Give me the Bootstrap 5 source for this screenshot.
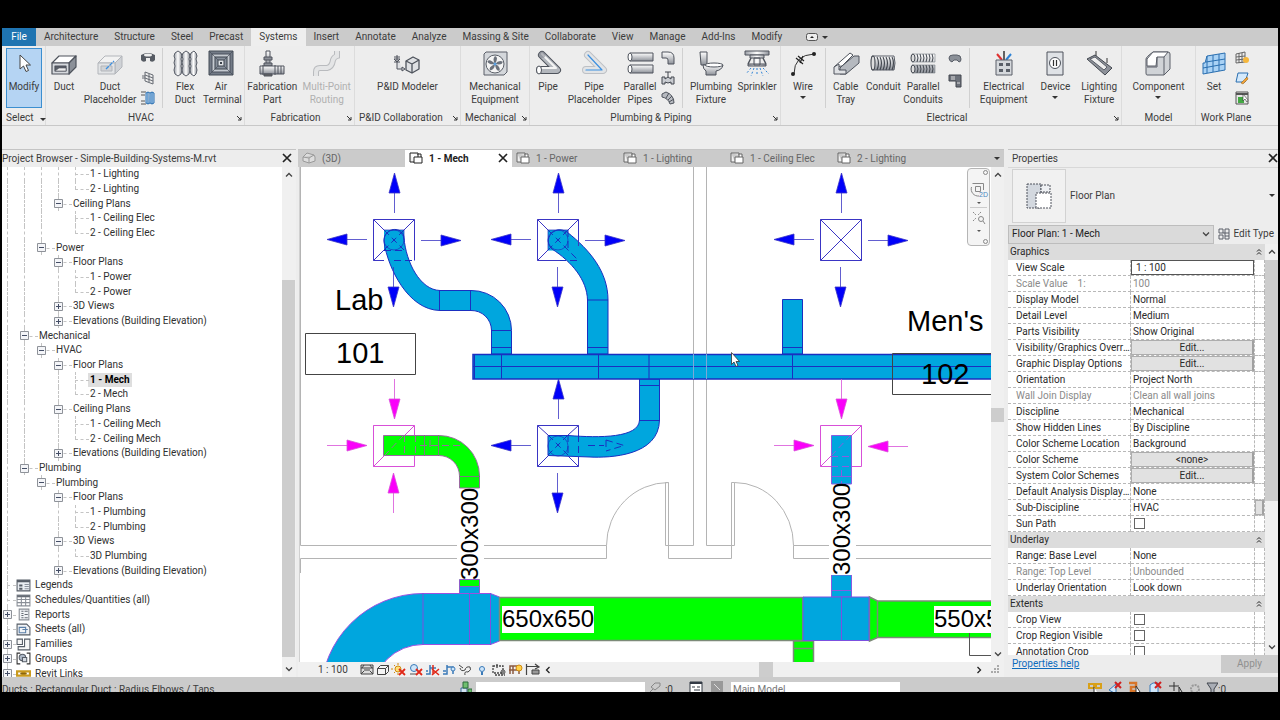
<!DOCTYPE html>
<html lang="en">
<head>
<meta charset="utf-8">
<meta name="viewport" content="width=device-width, initial-scale=1">
<title>Simple-Building-Systems-M.rvt - Floor Plan: 1 - Mech</title>
<link href="https://cdn.jsdelivr.net/npm/bootstrap@5.3.0/dist/css/bootstrap.min.css" rel="stylesheet">
<style>
:root{--chrome:#ededed;--bar:#cbcbcb;--ink:#3c3c3c;--edge:#c4c4c4}
body{background:#000;color:var(--ink);font:10px/14px Roboto,"Open Sans",sans-serif;padding:28px 2px;overflow:hidden}
button,input,select{font:inherit;color:inherit}
button{background:none;border:0;padding:0}
svg{display:block;flex:none}
.app{background:var(--chrome);min-height:0}
/* ribbon tabs */
.rtabs{background:var(--bar);height:18px}
.rtabs button{padding:0 8px;line-height:18px;white-space:nowrap}
.rtabs .file{background:#1f74b1;color:#fff;width:34px}
.rtabs .on{background:#eee}
/* ribbon */
.ribbon{height:80px;border-bottom:1px solid #c8c8c8}
.rp{border-right:1px solid #dcdcdc;position:relative}
.rp-title{line-height:16px;height:16px}
.rp-body{height:64px;padding-top:2px;align-items:flex-start}
.rb{text-align:center;line-height:13px;padding-top:2px;white-space:nowrap}
.rb svg{margin:0 auto 2px}
.rb.off{color:#b0b0b0}
.rb.sel{background:#b5d4f3;border:1px solid #3c8fd0;padding:1px 0 14px}
.w36{width:36px}.w40{width:40px}.w44{width:44px}.w48{width:48px}.w56{width:56px}.w60{width:60px}
.stk{width:20px;height:60px}
.vsep{width:1px;margin:0 4px;background:#d0d0d0;height:60px}
.dd{border:3px solid transparent;border-top:3px solid #333;border-bottom:0;width:0;height:0;display:inline-block}
.launch{position:absolute;right:2px;bottom:4px}
.p-sel{width:44px}.p-hvac{width:199px}.p-fab{width:110px}.p-pid{width:106px}.p-mech{width:69px}.p-plumb{width:251px}.p-elec{width:341px}.p-model{width:74px}.p-work{width:60px;border:0}
.options{height:23px}
/* docked panels */
.dock-l{width:294px;border-top:1px solid var(--edge)}
.dock-r{width:270px;border-top:1px solid var(--edge)}
.center{border-top:1px solid var(--edge);margin-left:2px}
.ph{height:17px;line-height:17px}
.tree{background:#fff;color:#303030}
.tree ul{height:calc(100% + 4px)}
.tree li{flex:1 1 0;min-height:0;display:flex;align-items:stretch;white-space:nowrap}
.tree li>span{align-self:center}
.tree b{align-self:center;background:#dedede;color:#000;padding:0 2px;margin-left:-2px}
.gd{width:17px;position:relative;flex:none}
.gd:first-child{width:14px}
.gd{--x:8px}.gd:first-child{--x:5px}
.gd.ln::before,.gd.te::before,.gd.co::before{content:"";position:absolute;left:var(--x);top:0;bottom:0;border-left:1px dashed #c4c4c4}
.gd.co::before{bottom:50%}
.gd.te::after,.gd.co::after,.gd.bx::after{content:"";position:absolute;left:var(--x);right:-5px;top:50%;border-top:1px dashed #c4c4c4}
.gd:first-child::after{right:0!important}
.gd svg{position:absolute;left:calc(var(--x) - 4px);top:3px;z-index:1}
.gap6{padding-left:6px}
.sb{width:13px;flex:none;background:#f0f0f0}
.sb .thumb{background:#cdcdcd}
.sb svg{margin:4px auto}
.dock-l .sb{width:14px;padding-right:1px}
.mw0{min-width:0}
/* view tabs */
.vtabs{background:var(--bar);height:17px;color:#666}
.vt{width:107px;padding-left:10px;line-height:17px;gap:6px}
.vt.on{background:#fff;color:#222;padding-left:4px}
.canvas{background:#fff;border-left:1px solid #d0d0d0;margin-left:1px}
.canvas text{font-family:"Liberation Sans",Arial,sans-serif}
.navw{position:absolute;top:1px;right:1px;width:23px;height:78px;border:1px solid #b5b5b5;border-radius:4px;background:#f4f4f4}
.viewbar{height:15px;background:#f0f0f0}
.viewbar .scale{width:46px;padding-left:20px;white-space:nowrap}
.gutter{margin-left:4px}
/* properties */
.typerow{border-top:1px solid #d8d8d8;padding:1px 3px 2px 4px}
.thumbbox{width:54px;height:54px;border:1px solid #d2d2d2;background:#f1f1f1}
.typesel{height:19px;background:#dadada;border:1px solid #bdbdbd;border-radius:0;padding:0 3px;appearance:none;color:#222}
.props{width:100%;table-layout:fixed;border-collapse:separate;border-spacing:0;background:#fff;color:#2a2a2a}
.props td,.props th{height:16px;padding:0 2px;line-height:15px;font-weight:400;white-space:nowrap;overflow:hidden;border-bottom:1px dashed #b8b8b8;border-right:1px dashed #b8b8b8}
.props th[scope=row]{padding:0 0 0 8px;text-overflow:ellipsis}
.props th.grp{background:#dcdcdc;border:0;line-height:16px}
.props .dim>*{color:#8a8a8a}
.props td.full{padding:0}
.props .eb{display:block;width:100%;height:15px;background:#e1e1e1;border:1px solid #adadad;border-right:2px solid #a0a0a0;line-height:13px;text-align:center}
.props input[type=text]{display:block;width:100%;height:15px;border:1px solid #555;padding:0 4px;background:#fff}
.props input[type=checkbox]{appearance:none;display:block;width:11px;height:11px;border:1px solid #666;margin:0 0 0 1px;background:#fff}
.cn{width:123px}.cx{width:10px}
.apply{width:57px;height:18px;background:#cbcbcb;color:#8f8f8f}
.help{color:#0f6cbd}
/* status bar */
.status{height:15px;background:var(--bar);overflow:hidden}
.status>*{flex:none}
.status select{appearance:none;height:20px;margin-top:5px;border:0;border-radius:0;background:#fff;color:#777;padding:0 6px 4px 2px;line-height:16px}
.st{line-height:26px}
.status .worksets{width:169px}
.status .toolset{margin-left:188px}
.status .st:last-child{margin-right:4px}
</style>
</head>
<body class="vh-100 d-flex flex-column">

<svg width="0" height="0" class="position-absolute" aria-hidden="true">
<defs>
<linearGradient id="gm" x1="0" y1="0" x2="0" y2="1"><stop offset="0" stop-color="#fff"/><stop offset="1" stop-color="#8d9199"/></linearGradient>
<linearGradient id="gh" x1="0" y1="0" x2="1" y2="0"><stop offset="0" stop-color="#9a9ea6"/><stop offset=".5" stop-color="#fff"/><stop offset="1" stop-color="#8d9199"/></linearGradient>
<symbol id="i-duct" viewBox="0 0 28 28"><g stroke="#4e535c" stroke-width="1.2" stroke-linejoin="round"><path d="M2 13L9 6H26L19 13z" fill="#fff"/><path d="M19 13L26 6V17L19 24z" fill="#8b9098"/><path d="M2 13H19V24H2z" fill="#d6d9dd"/><path d="M5 16H16V21H5z" fill="#5a5f68"/><path d="M5 21L9 18H16V21z" fill="#eee" stroke-width=".6"/></g></symbol>
<symbol id="i-ductp" viewBox="0 0 28 28"><g stroke="#b2b5ba" stroke-linejoin="round"><path d="M2 13L9 6H26L19 13z" fill="#f2f2f2"/><path d="M19 13L26 6V17L19 24z" fill="#cfd2d6"/><path d="M2 13H19V24H2z" fill="#e2e4e6"/><path d="M5 16H16V21H5z" fill="#d0d2d5"/></g><path d="M10 19L18 11" stroke="#3b8fe0" stroke-width="1.3" stroke-dasharray="4 1"/></symbol>
<symbol id="i-flex" viewBox="0 0 28 28"><g fill="url(#gh)" stroke="#5b606a" stroke-width="1"><path d="M4 3L7 1L10 3Q12 6 10 9Q12 13 10 16Q12 20 10 24L7 26L4 24Q2 20 4 16Q2 13 4 9Q2 6 4 3z"/><path d="M12 3L15 1L18 3Q20 6 18 9Q20 13 18 16Q20 20 18 24L15 26L12 24Q10 20 12 16Q10 13 12 9Q10 6 12 3z"/><path d="M20 3L23 1L25 3Q27 6 25 9Q27 13 25 16Q27 20 25 24L23 26L20 24Q18 20 20 16Q18 13 20 9Q18 6 20 3z"/></g></symbol>
<symbol id="i-air" viewBox="0 0 28 28"><path d="M2 1H26V25H2z" fill="#737b87" stroke="#454c57"/><path d="M5 4H23V22H5z" fill="#c5cad1" stroke="#4a515c"/><path d="M8 7H20V19H8z" fill="#858d99" stroke="#3d444e"/><path d="M11 10H17V16H11z" fill="#dfe2e6" stroke="#3d444e"/><path d="M13 12H15V14H13z" fill="#394049"/><path d="M2 1L11 10M26 1L17 10M2 25L11 16M26 25L17 16" stroke="#454c57" stroke-width=".7"/></symbol>
<symbol id="i-fab" viewBox="0 0 28 28"><g fill="url(#gm)" stroke="#4e535c"><path d="M8 1H12V15H8z"/><path d="M6 7H14V10H6zM6 13H14V16H6z" fill="#8d9199"/><path d="M2 16H26V24H2z"/><path d="M17 15V25M20 16V24M23 16V24M5 15V25" fill="none"/><path d="M6 24H14V26H6z" fill="#666"/></g></symbol>
<symbol id="i-multi" viewBox="0 0 28 28"><path d="M3 26V22Q3 18 7 18H14Q19 17 20 10Q21 7 24 6V1" fill="none" stroke="#b9bbbe" stroke-width="6"/><path d="M3 26V22Q3 18 7 18H14Q19 17 20 10Q21 7 24 6V1" fill="none" stroke="#e4e5e6" stroke-width="4"/></symbol>
<symbol id="i-pid" viewBox="0 0 28 28"><g fill="#dfe1e4" stroke="#4e535c" stroke-width="1.3" stroke-linejoin="round"><path d="M13 11L20 7L26 10V19L19 23L13 20z"/><path d="M13 11L19 14L26 10M19 14V23" fill="none"/><path d="M4 5V19H9M1 7H7M1 12H7M4 12L1 9H7zM9 17V21L12 19z" stroke-width="1"/></g></symbol>
<symbol id="i-mech" viewBox="0 0 28 28"><path d="M3 4L5 2H26V22L23 25H3z" fill="#d4d7db" stroke="#5a5f68"/><circle cx="14" cy="14" r="9" fill="#f4f4f4" stroke="#5a5f68"/><g fill="#6b717b"><path d="M14 14Q11 9 14 6Q18 7 14 14z"/><path d="M14 14Q11 9 14 6Q18 7 14 14z" transform="rotate(72 14 14)"/><path d="M14 14Q11 9 14 6Q18 7 14 14z" transform="rotate(144 14 14)"/><path d="M14 14Q11 9 14 6Q18 7 14 14z" transform="rotate(216 14 14)"/><path d="M14 14Q11 9 14 6Q18 7 14 14z" transform="rotate(288 14 14)"/></g><circle cx="14" cy="14" r="1.5" fill="#5ba0e0"/></symbol>
<symbol id="i-pipe" viewBox="0 0 28 28"><g fill="none" stroke-linecap="round" stroke-linejoin="round"><path d="M8 5L23 20H6" stroke="#4e535c" stroke-width="8"/><path d="M8 5L23 20H6" stroke="#b3b7bd" stroke-width="6"/><path d="M8 4L22 18H6" stroke="#f4f4f4" stroke-width="2"/></g><ellipse cx="5" cy="20" rx="2.500" ry="4" fill="#fff" stroke="#4e535c"/><ellipse cx="8" cy="5" rx="3.500" ry="3" fill="#777c85" opacity=".5"/></symbol>
<symbol id="i-pipep" viewBox="0 0 28 28"><g fill="none" stroke-linecap="round" stroke-linejoin="round"><path d="M8 5L23 20H6" stroke="#bdc0c5" stroke-width="8"/><path d="M8 5L23 20H6" stroke="#e2e4e6" stroke-width="6"/><path d="M8 5L22 20H6" stroke="#3b8fe0" stroke-width="1.2"/></g></symbol>
<symbol id="i-par" viewBox="0 0 28 28"><g fill="url(#gm)" stroke="#4e535c"><path d="M4 3H27V11H4z"/><ellipse cx="4" cy="7" rx="2" ry="4" fill="#fff"/><path d="M4 15H27V23H4z"/><ellipse cx="4" cy="19" rx="2" ry="4" fill="#fff"/></g></symbol>
<symbol id="i-wc" viewBox="0 0 28 28"><g fill="url(#gm)" stroke="#4e535c"><path d="M3 2H10V15H4z"/><path d="M6 15H26Q25 20 19 21V25H9V21Q6 19 6 15z"/><ellipse cx="17" cy="15" rx="9" ry="2" fill="#fff"/></g></symbol>
<symbol id="i-spr" viewBox="0 0 28 28"><g fill="url(#gh)" stroke="#4e535c"><path d="M2 1H26V5H2z"/><path d="M7 5H21V8H7zM11 8H17V15H11zM5 14H23V16H5z"/><path d="M8 8L5 14M20 8L23 14" stroke-width="1.500"/></g><path d="M8 18L3 24M11 18L8 26M14 18V26M17 18L20 26M20 18L26 24" stroke="#2f83d6" stroke-dasharray="2 2"/></symbol>
<symbol id="i-wire" viewBox="0 0 28 28"><path d="M5 24Q5 5 25 4" fill="none" stroke="#333"/><circle cx="4" cy="24" r="2" fill="#222"/><circle cx="25" cy="4" r="2" fill="#222"/><path d="M7 8L14 14M9 6L15 11M11 13L14 6" stroke="#222" stroke-width="1.200"/></symbol>
<symbol id="i-tray" viewBox="0 0 28 28"><g stroke="#4e535c" stroke-linejoin="round"><path d="M2 17L18 3L21 5L10 16z" fill="#fff"/><path d="M10 16L22 6L27 6V13L14 24L8 24V18z" fill="#b5b9bf"/><path d="M2 17L7 14V20L14 20V24H2z" fill="#dfe1e4"/></g></symbol>
<symbol id="i-cond" viewBox="0 0 28 28"><path d="M3 6H25Q27 13 25 20H3z" fill="url(#gm)" stroke="#5a5f68"/><g fill="none" stroke="#42474f" stroke-width="1.100"><ellipse cx="4" cy="13" rx="2" ry="7" fill="#ddd"/><path d="M8 7Q11 13 8 20M11 7Q14 13 11 20M14 7Q17 13 14 20M17 7Q20 13 17 20M20 7Q23 13 20 20M23 7Q26 13 23 20"/></g></symbol>
<symbol id="i-pcond" viewBox="0 0 28 28"><path d="M3 4H26V12H3zM3 15H26V23H3z" fill="url(#gm)" stroke="#7a7f88" stroke-width=".6"/><g fill="none" stroke="#42474f"><ellipse cx="4" cy="8" rx="2" ry="4" fill="#ddd"/><ellipse cx="4" cy="19" rx="2" ry="4" fill="#ddd"/><path d="M8 4Q10 8 8 12M11 4Q13 8 11 12M14 4Q16 8 14 12M17 4Q19 8 17 12M20 4Q22 8 20 12M23 4Q25 8 23 12M8 15Q10 19 8 23M11 15Q13 19 11 23M14 15Q16 19 14 23M17 15Q19 19 17 23M20 15Q22 19 20 23M23 15Q25 19 23 23"/></g></symbol>
<symbol id="i-eleq" viewBox="0 0 28 28"><path d="M14 1V10" stroke="#333" stroke-width="1.500"/><path d="M7 4L12 10" stroke="#e03030" stroke-width="2"/><path d="M21 4L16 10" stroke="#2f83d6" stroke-width="2"/><path d="M6 10H22V25H6z" fill="#d5d8dc" stroke="#5a5f68"/><path d="M9 13H13V16H9zM16 13H20V16H16zM9 19H13V22H9zM16 19H20V22H16z" fill="#5a5f68"/></symbol>
<symbol id="i-dev" viewBox="0 0 28 28"><path d="M6 2H22V25H6z" fill="#dfe2e6" stroke="#4e535c"/><circle cx="14" cy="13" r="5.500" fill="#fff" stroke="#4e535c"/><path d="M12.500 10V16M15.500 10V16" stroke="#333" stroke-width="1.200"/></symbol>
<symbol id="i-light" viewBox="0 0 28 28"><path d="M11 1V6M22 8V13" stroke="#333"/><path d="M2 9L10 5L27 18L20 25z" fill="#8d9199" stroke="#42474f"/><path d="M5 9L10 7L22 17L19 20z" fill="#eee" stroke="#5a5f68"/></symbol>
<symbol id="i-comp" viewBox="0 0 28 28"><g stroke="#5a5f68" stroke-linejoin="round"><path d="M2 9Q2 7 9 2H24Q26 2 26 4V19L20 25H3Q2 25 2 23z" fill="#d0d3d7"/><path d="M9 2H24L20 7H13L12 16H3V9z" fill="#fff"/><path d="M20 7V25M13 7V17H3" fill="none"/></g></symbol>
<symbol id="i-set" viewBox="0 0 28 28"><path d="M3 13V24L25 20V3L7 6L5 13z" fill="#a9d2f5" stroke="#2a6fb0"/><path d="M7 6V23M13 5V22M19 4V21M3 18L25 14M6 12L25 9" stroke="#2a6fb0" fill="none"/></symbol>
<symbol id="s-ring" viewBox="0 0 14 14"><path d="M0 4Q7 0 14 4V9Q12 12 9 10V7H5V10Q2 12 0 9z" fill="#565b63"/><ellipse cx="7" cy="4" rx="4" ry="1.500" fill="#eee"/></symbol>
<symbol id="s-panel" viewBox="0 0 14 14"><path d="M4 1L12 4V13L4 10zM1 5H4M1 7H4M4 4L12 7M4 7L12 10M8 3V11" fill="none" stroke="#666b73"/></symbol>
<symbol id="s-flexb" viewBox="0 0 14 14"><path d="M0 1H5M0 13H5M0 4H4M0 10H4" stroke="#555"/><path d="M5 2L7 1V13L5 12zM9 2L7 1M9 2V12L7 13M9 2L11 1V13L9 12M11 1L13 2V12L11 13" fill="#b9daf6" stroke="#2a6fb0"/></symbol>
<symbol id="s-elbow" viewBox="0 0 14 14"><path d="M1 1H7Q13 1 13 7V13H7V9Q7 7 5 7H1z" fill="url(#gm)" stroke="#4e535c"/></symbol>
<symbol id="s-valve" viewBox="0 0 14 14"><path d="M4 1H10M7 1V6M1 6H4V8L7 6L10 8V6H13V13H10V11L7 12L4 11V13H1z" fill="#c9ccd1" stroke="#42474f"/></symbol>
<symbol id="s-fpipe" viewBox="0 0 14 14"><path d="M1 3L5 1Q13 4 13 12L9 13Q7 7 1 6z" fill="#b7bac0" stroke="#4e535c"/><path d="M5 7L8 2M7 9L11 5M8 11L13 8" stroke="#4e535c"/></symbol>
<symbol id="s-cf" viewBox="0 0 14 14"><path d="M1 6Q1 3 5 3H9Q13 3 13 7Q13 10 11 10L9 8H6L4 10Q1 9 1 6z" fill="#8b9098" stroke="#5a5f68"/></symbol>
<symbol id="s-ce" viewBox="0 0 14 14"><path d="M1 1H13V13H8V7H1z" fill="#6c717a" stroke="#42474f"/><path d="M4 2V6M6 2V6M9 9H12" stroke="#ddd"/></symbol>
<symbol id="s-w1" viewBox="0 0 14 14"><path d="M1 3L10 1V11L1 12zM1 6L10 5M1 9L10 8M4 2V12M7 2V12" fill="#eee" stroke="#666"/><circle cx="11" cy="9" r="3" fill="#f6b73c"/></symbol>
<symbol id="s-w2" viewBox="0 0 14 14"><path d="M3 2H13L10 11H1z" fill="#d4e9fb" stroke="#2a6fb0"/><path d="M6 12L12 6L13 8L8 13z" fill="#f2a33a" stroke="#8a5a10" stroke-width=".5"/></symbol>
<symbol id="s-w3" viewBox="0 0 14 14"><path d="M1 1H13V13H1z" fill="#e6e6e6" stroke="#555"/><path d="M1 3H13" stroke="#555" stroke-width="2"/><path d="M3 6H9V12H3z" fill="#43a843"/><path d="M8 3L8 10L10 8L12 11L13 9z" fill="#fff" stroke="#333" stroke-width=".6"/></symbol>
<symbol id="i-cur" viewBox="0 0 28 28"><path d="M10 5V19L13.500 16L16 21.500L18.500 20.500L16 15H20.500z" fill="#fff" stroke="#444"/></symbol>
<symbol id="x" viewBox="0 0 10 10"><path d="M1 1L9 9M9 1L1 9" stroke="#222" stroke-width="1.700"/></symbol>
<symbol id="up" viewBox="0 0 8 8"><path d="M1 5.500L4 2.500L7 5.500" fill="none" stroke="#444" stroke-width="1.300"/></symbol>
<symbol id="dn" viewBox="0 0 8 8"><path d="M1 2.500L4 5.500L7 2.500" fill="none" stroke="#444" stroke-width="1.300"/></symbol>
<symbol id="la" viewBox="0 0 6 6"><path d="M1 1L5 5M5 2V5H2" fill="none" stroke="#333"/></symbol>
<symbol id="plan" viewBox="0 0 14 12"><path d="M1 1H9V3M1 1V10H5" fill="#f0f0f0" stroke="currentColor"/><path d="M5 5H13V11H5zM9 5V2H12V5" fill="#fff" stroke="currentColor"/></symbol>
<symbol id="house" viewBox="0 0 14 12"><path d="M1 5L5 1L12 3L13 5V9L7 11L1 9zM1 5L7 6L12 3M7 6V11" fill="#ddd" stroke="#999"/></symbol>
<symbol id="bp" viewBox="0 0 9 9"><path d="M.5.5H8.500V8.500H.5z" fill="#f4f5f8" stroke="#8e9299"/><path d="M2 4.500H7M4.500 2V7" stroke="#444e66"/></symbol>
<symbol id="bm" viewBox="0 0 9 9"><path d="M.5.5H8.500V8.500H.5z" fill="#f4f5f8" stroke="#8e9299"/><path d="M2 4.500H7" stroke="#444e66"/></symbol>
<symbol id="t-leg" viewBox="0 0 14 12"><path d="M1 1H13V11H1z" fill="#e9edf2" stroke="#555c66"/><path d="M1 2H13" stroke="#555c66" stroke-width="2"/><path d="M3 5H6V7H3zM3 8H6V10H3z" fill="#555c66"/><path d="M8 5H12M8 7H12M8 9H12" stroke="#8a919c"/></symbol>
<symbol id="t-sch" viewBox="0 0 14 12"><path d="M1 1H13V11H1zM1 5H13M1 8H13M5 3V11M9 3V11" fill="#fff" stroke="#8a8f97"/><path d="M1 2H13" stroke="#666c75" stroke-width="2"/></symbol>
<symbol id="t-rep" viewBox="0 0 14 12"><path d="M3 1H12V11H3z" fill="#f0f2f5" stroke="#8a8f97"/><path d="M5 3H7M5 5H7M5 7H7M5 9H7M8 3H11M8 6H11M8 9H11" stroke="#666c75"/></symbol>
<symbol id="t-she" viewBox="0 0 14 12"><path d="M1 1H10L13 4V11H1z" fill="#f0f2f5" stroke="#555c66"/><path d="M3 4H9V9H3zM6 6H11" fill="none" stroke="#5a7fa8"/></symbol>
<symbol id="t-fam" viewBox="0 0 14 12"><path d="M1 1H6V6H1zM8 1H13V11H2V8H8z" fill="#f6f6f6" stroke="#555c66"/></symbol>
<symbol id="t-grp" viewBox="0 0 14 12"><path d="M4 1H1V11H4M10 1H13V11H10" fill="none" stroke="#333"/><circle cx="6" cy="5" r="3" fill="#aeb9c8" stroke="#555c66"/><path d="M6 5H10V9H6z" fill="#d5dbe3" stroke="#555c66"/></symbol>
<symbol id="t-lnk" viewBox="0 0 14 12"><path d="M1 4H6V8H1zM8 4H13V8H8z" fill="none" stroke="#c99a1e" stroke-width="2"/><path d="M4 6H10" stroke="#8a6510" stroke-width="1.500"/></symbol>
</defs>
</svg>

<div class="app flex-fill d-flex flex-column overflow-hidden">

<nav class="rtabs d-flex" aria-label="Ribbon tabs">
<button class="file">File</button><button>Architecture</button><button>Structure</button><button>Steel</button><button>Precast</button><button class="on">Systems</button><button>Insert</button><button>Annotate</button><button>Analyze</button><button>Massing &amp; Site</button><button>Collaborate</button><button>View</button><button>Manage</button><button>Add-Ins</button><button>Modify</button>
<button class="d-flex align-items-center ms-2 gap-1" aria-label="Minimize ribbon"><svg width="12" height="8" viewBox="0 0 12 8"><rect x=".5" y=".5" width="11" height="7" rx="2" fill="#eee" stroke="#555"/><path d="M4 5L6 3L8 5z" fill="#222"/></svg><span class="dd"></span></button>
</nav>

<div class="ribbon d-flex">
<section class="rp p-sel"><div class="rp-body ps-1 pe-1"><button class="rb sel w36"><svg width="28" height="28"><use href="#i-cur"/></svg>Modify</button></div><div class="rp-title px-1 text-nowrap">Select <span class="dd ms-1"></span></div></section>
<section class="rp p-hvac"><div class="rp-body d-flex">
<button class="rb w36"><svg width="28" height="28"><use href="#i-duct"/></svg>Duct</button>
<button class="rb w56"><svg width="28" height="28"><use href="#i-ductp"/></svg>Duct<br>Placeholder</button>
<div class="stk d-flex flex-column align-items-center justify-content-around"><button aria-label="Duct fitting"><svg width="14" height="14"><use href="#s-ring"/></svg></button><button aria-label="Duct accessory"><svg width="14" height="14"><use href="#s-panel"/></svg></button><button aria-label="Convert to flex duct"><svg width="14" height="14"><use href="#s-flexb"/></svg></button></div>
<div class="vsep"></div>
<button class="rb w36"><svg width="28" height="28"><use href="#i-flex"/></svg>Flex<br>Duct</button>
<button class="rb w36"><svg width="28" height="28"><use href="#i-air"/></svg>Air<br>Terminal</button></div>
<div class="rp-title text-center pe-2">HVAC<svg class="launch" width="6" height="6"><use href="#la"/></svg></div></section>
<section class="rp p-fab"><div class="rp-body d-flex justify-content-center">
<button class="rb w56"><svg width="28" height="28"><use href="#i-fab"/></svg>Fabrication<br>Part</button><button class="rb w56 off"><svg width="28" height="28"><use href="#i-multi"/></svg>Multi-Point<br>Routing</button></div>
<div class="rp-title text-center pe-2">Fabrication<svg class="launch" width="6" height="6"><use href="#la"/></svg></div></section>
<section class="rp p-pid"><div class="rp-body d-flex justify-content-center"><button class="rb"><svg width="28" height="28"><use href="#i-pid"/></svg>P&amp;ID Modeler</button></div>
<div class="rp-title text-nowrap ps-1">P&amp;ID Collaboration<svg class="launch" width="6" height="6"><use href="#la"/></svg></div></section>
<section class="rp p-mech"><div class="rp-body d-flex justify-content-center"><button class="rb"><svg width="28" height="28"><use href="#i-mech"/></svg>Mechanical<br>Equipment</button></div>
<div class="rp-title ps-1">Mechanical<svg class="launch" width="6" height="6"><use href="#la"/></svg></div></section>
<section class="rp p-plumb"><div class="rp-body d-flex">
<button class="rb w36"><svg width="28" height="28"><use href="#i-pipe"/></svg>Pipe</button>
<button class="rb w56"><svg width="28" height="28"><use href="#i-pipep"/></svg>Pipe<br>Placeholder</button>
<button class="rb w36"><svg width="28" height="28"><use href="#i-par"/></svg>Parallel<br>Pipes</button>
<div class="stk d-flex flex-column align-items-center justify-content-around"><button aria-label="Pipe fitting"><svg width="14" height="14"><use href="#s-elbow"/></svg></button><button aria-label="Pipe accessory"><svg width="14" height="14"><use href="#s-valve"/></svg></button><button aria-label="Flex pipe"><svg width="14" height="14"><use href="#s-fpipe"/></svg></button></div>
<div class="vsep"></div>
<button class="rb w48"><svg width="28" height="28"><use href="#i-wc"/></svg>Plumbing<br>Fixture</button>
<button class="rb w44"><svg width="28" height="28"><use href="#i-spr"/></svg>Sprinkler</button></div>
<div class="rp-title text-center pe-2">Plumbing &amp; Piping<svg class="launch" width="6" height="6"><use href="#la"/></svg></div></section>
<section class="rp p-elec"><div class="rp-body d-flex">
<button class="rb w44"><svg width="28" height="28"><use href="#i-wire"/></svg>Wire<br><span class="dd mb-1"></span></button>
<div class="vsep ms-0 me-0"></div>
<button class="rb w40"><svg width="28" height="28"><use href="#i-tray"/></svg>Cable<br>Tray</button>
<button class="rb w36"><svg width="28" height="28"><use href="#i-cond"/></svg>Conduit</button>
<button class="rb w44"><svg width="28" height="28"><use href="#i-pcond"/></svg>Parallel<br>Conduits</button>
<div class="stk d-flex flex-column align-items-center"><button class="mt-1" aria-label="Conduit fitting"><svg width="14" height="14"><use href="#s-cf"/></svg></button><button class="mt-2" aria-label="Cable tray fitting"><svg width="14" height="14"><use href="#s-ce"/></svg></button></div>
<div class="vsep"></div>
<button class="rb w60"><svg width="28" height="28"><use href="#i-eleq"/></svg>Electrical<br>Equipment</button>
<button class="rb w44"><svg width="28" height="28"><use href="#i-dev"/></svg>Device<br><span class="dd mb-1"></span></button>
<button class="rb w44"><svg width="28" height="28"><use href="#i-light"/></svg>Lighting<br>Fixture</button></div>
<div class="rp-title text-center pe-2">Electrical<svg class="launch" width="6" height="6"><use href="#la"/></svg></div></section>
<section class="rp p-model"><div class="rp-body d-flex justify-content-center"><button class="rb"><svg width="28" height="28"><use href="#i-comp"/></svg>Component<br><span class="dd mb-1"></span></button></div><div class="rp-title text-center">Model</div></section>
<section class="rp p-work"><div class="rp-body d-flex"><button class="rb w36"><svg width="28" height="28"><use href="#i-set"/></svg>Set</button>
<div class="stk d-flex flex-column align-items-center justify-content-around"><button aria-label="Show work plane"><svg width="14" height="14"><use href="#s-w1"/></svg></button><button aria-label="Reference plane"><svg width="14" height="14"><use href="#s-w2"/></svg></button><button aria-label="Work plane viewer"><svg width="14" height="14"><use href="#s-w3"/></svg></button></div></div>
<div class="rp-title text-center text-nowrap">Work Plane</div></section>
</div>
<div class="options"></div>

<main class="flex-fill d-flex overflow-hidden">
<aside class="dock-l d-flex flex-column flex-shrink-0">
<div class="ph d-flex justify-content-between align-items-center pe-1"><span>Project Browser - Simple-Building-Systems-M.rvt</span><button aria-label="Close project browser"><svg width="10" height="10"><use href="#x"/></svg></button></div>
<div class="flex-fill d-flex overflow-hidden">
<div class="tree flex-fill overflow-hidden"><ul class="list-unstyled m-0 d-flex flex-column" id="tree"></ul></div>
<div class="sb d-flex flex-column" aria-hidden="true"><svg class="mt-0 pt-1" width="8" height="12"><use href="#up"/></svg><div style="flex:96"></div><div class="thumb" style="flex:373"></div><svg class="mt-2" width="8" height="8"><use href="#dn"/></svg></div>
</div>
</aside>

<section class="center flex-fill d-flex flex-column overflow-hidden">
<div class="vtabs d-flex align-items-center">
<button class="vt d-flex align-items-center ps-1"><svg width="14" height="12"><use href="#house"/></svg>(3D)</button>
<div class="vt on d-flex align-items-center"><svg width="14" height="12"><use href="#plan"/></svg><strong>1 - Mech</strong><button class="ms-auto me-1" aria-label="Close view"><svg width="10" height="10"><use href="#x"/></svg></button></div>
<button class="vt d-flex align-items-center ps-1"><svg width="14" height="12"><use href="#plan"/></svg>1 - Power</button>
<button class="vt d-flex align-items-center ps-1"><svg width="14" height="12"><use href="#plan"/></svg>1 - Lighting</button>
<button class="vt d-flex align-items-center ps-1"><svg width="14" height="12"><use href="#plan"/></svg>1 - Ceiling Elec</button>
<button class="vt d-flex align-items-center ps-1"><svg width="14" height="12"><use href="#plan"/></svg>2 - Lighting</button>
<span class="dd ms-auto me-1"></span>
</div>
<div class="flex-fill d-flex overflow-hidden">
<div class="canvas flex-fill position-relative overflow-hidden">
<svg class="w-100 h-100 position-absolute" role="img" aria-label="Mechanical floor plan">
<defs>
<path id="out" d="M27 .5H47M47-5L67 .5L47 6z"/>
<path id="in" d="M67 .5H47M47-5L27 .5L47 6z"/>
</defs>
<g transform="translate(-300 -167)">
<!-- walls and doors -->
<g fill="none" stroke="#b4b4b4">
<path d="M300.500 167V545.500H606.500V558.500H300.500V573"/>
<path d="M606.500 545.500A62 63 0 0 1 668.500 482.500H665.500V545.500H693.500V167M668.500 482.500V558.500H731.500V482.500H734.500V545.500H706.500V167M734.500 482.500A59 63 0 0 1 793.500 545.500M1600 545.500H793.500V558.500H1600"/>
</g>
<!-- supply ducts -->
<g fill="#00a6de" stroke="#1a2fc0">
<rect x="384" y="230" width="20" height="20.500" stroke="none"/><rect x="548" y="230" width="20" height="20.500" stroke="none"/>
<path d="M384 242C383 226 404 226 404 238C406 262 420 290 440 290.500H471A40 40 0 0 1 511.500 330.500V354H491.500V330A20 20 0 0 0 471 310.500H440C408 310 388 268 384 242z"/>
<path d="M567 232C590 250 608 272 608 300V354H587.500V300C587 280 572 262 552 249C542 240 554 224 567 232z"/>
<path d="M548 435.500H568C600 438 639 438 639.500 420V379H659.500V420C659 456 610 458 590 457L548 455.500z"/>
<path d="M782.500 299.500H802.500V354H782.500z"/>
<path d="M473 354.500H1600V379H473z" stroke-width="1.500"/>
<path fill="none" d="M473 366.500H1600M474.500 354V379M501.500 354V379M598.500 354V379M649 354V379M792.500 354V379M439.500 290V310M470.500 290V310M491 330.500H511M491 347.500H511M587 300H608M587 347.500H608M782 347.500H803M639 385.500H660M639 420.500H660"/>
<path fill="none" stroke-dasharray="7 4" d="M384 230L404 250M404 230L384 250M384 250.500H404M394 260.500H414M548 230L579 261M568 230L548 250M568 230V250M548 260.500H579M548 435L568 455M568 435L548 455M568 435V456M578.500 435V456M588 445.500H604M606 440V451M606 440L624 445.500L606 451"/>
<g fill="none" stroke-width=".7"><path d="M384 230H404V240M548 250V230H568"/><circle cx="394" cy="240" r="10"/><circle cx="558" cy="240" r="10"/><circle cx="558" cy="446" r="10"/></g>
</g>
<path d="M693.500 354V379M706.500 354V379" stroke="#7ba6d8"/>
<!-- supply diffusers -->
<g fill="none" stroke="#3a35c4">
<path d="M384 260.500H373.500V219.500H414.500V260.500M373.500 219.500L384 230M414.500 219.500L404 230M373.500 260.500L384 250"/>
<path d="M578.500 246V219.500H537.500V260.500H560M537.500 219.500L548 230M578.500 219.500L568 230M537.500 260.500L548 250"/>
<path d="M820.500 219.500H861.500V260.500H820.500zL861.500 260.500M861.500 219.500L820.500 260.500"/>
<path d="M578.500 435V425.500H537.500V466.500H578.500V457M537.500 425.500L548 435M578.500 425.500L568 435M537.500 466.500L548 456M578.500 466.500L568 456"/>
</g>
<g fill="#0000fa" stroke="#3a35c4" stroke-width=".8">
<g transform="translate(394 240)"><use href="#out"/><use href="#out" transform="rotate(90)"/><use href="#out" transform="rotate(180)"/><use href="#out" transform="rotate(270)"/></g>
<g transform="translate(558 240)"><use href="#out"/><use href="#out" transform="rotate(90)"/><use href="#out" transform="rotate(180)"/><use href="#out" transform="rotate(270)"/></g>
<g transform="translate(841 240)"><use href="#out"/><use href="#out" transform="rotate(90)"/><use href="#out" transform="rotate(180)"/><use href="#out" transform="rotate(270)"/></g>
<g transform="translate(558 446)"><use href="#out" transform="rotate(90)"/><use href="#out" transform="rotate(180)"/><use href="#out" transform="rotate(270)"/></g>
</g>
<!-- return grilles -->
<g fill="none" stroke="#d850d8">
<path d="M373.500 425.500H414.500V466.500H373.500zL373.500 466.500M414.500 425.500L373.500 466.500M820.500 425.500H861.500V466.500H820.500zM861.500 425.500L820.500 466.500"/>
</g>
<path d="M383.500 435.500H439A40.500 40.500 0 0 1 479.500 476V488H459.500V476A20.500 20.500 0 0 0 439 455.500H383.500z" fill="#0f0" stroke="#9a6aa0"/>
<path d="M424.500 435V456M438.500 435V456M459 476.500H480" stroke="#7a7a80"/>
<path d="M384 456L404 435M404.500 435V456M415.500 435V456M420 445.500H460M430 440V451" stroke="#9a6aa0" stroke-dasharray="7 4"/>
<path d="M831.500 435.500H851.500V484H831.500zM831.500 575H851.500V597H831.500z" fill="#00a6de" stroke="#8a5be0"/>
<path d="M831 476.500H852M831 590.500H852" stroke="#8a5be0"/>
<path d="M831 456L851 435M831 456.500H852M831 466.500H852M841.500 470V484" stroke="#8a5be0" stroke-dasharray="7 4"/>
<g fill="#fa00fa" stroke="#d850d8" stroke-width=".8">
<g transform="translate(394 446)"><use href="#in" transform="rotate(90)"/><use href="#in" transform="rotate(180)"/><use href="#in" transform="rotate(270)"/></g>
<g transform="translate(841 446)"><use href="#in"/><use href="#in" transform="rotate(180)"/><use href="#in" transform="rotate(270)"/></g>
</g>
<!-- return main -->
<g stroke="#8f5cc8">
<path d="M459.500 579.500H479.500V587H459.500z" fill="#0f0"/><path d="M459.500 586.500H479.500V594H459.500z" fill="#00a6de"/>
<path d="M423 593.500A102 102 0 0 0 321 695H372A51 51 0 0 1 423 644.500H490.500L499.500 641V597L490.500 593.500z" fill="#00a6de" stroke="#9c50e0"/>
<path d="M423 593V645M469.500 593V645M490.500 593V645" stroke="#7b50e0"/>
<path d="M499.500 597.500H803V640.500H499.500zM869.500 597L877.500 601H1600V637.500H877.500L869.500 641zM793.500 641H813.500V700H793.500zM877.500 601V637M793 648.500H814" fill="#0f0" stroke="#7c8a78" stroke-width="1.500"/>
<path d="M803 597H869V640.500H803z" fill="#00a6de" stroke="#7b50e0"/><path d="M841.500 597V641" stroke="#7b50e0"/>
</g>
<!-- tags -->
<path d="M457 489H484V579H457zM829 485H856V575H829zM502 606H594V633H502zM934 606H1030V633H934z" fill="#fff"/>
<path d="M969.500 633V655.500H1100" fill="none" stroke="#555"/>
<g font-size="24" fill="#000">
<text x="502" y="627">650x650</text><text x="934" y="627">550x550</text>
<text transform="translate(478 580) rotate(-90)">300x300</text><text transform="translate(850 575) rotate(-90)">300x300</text>
</g>
<g fill="none" stroke="#444"><path d="M305.500 333.500H415.500V374.500H305.500zM1100 353.500H892.500V394.500H1100"/></g>
<g font-size="29" fill="#000"><text x="335" y="310">Lab</text><text x="336" y="363">101</text><text x="907" y="331">Men's</text><text x="921" y="384">102</text></g>
<path d="M731.500 352.500V364.500L734 362L736 366.500L738 365.500L736 361.500H739.500z" fill="#fff" stroke="#333" stroke-width=".8"/>
</g>
</svg>
<div class="navw"><svg width="21" height="76" viewBox="0 0 21 76" fill="none" stroke="#888"><circle cx="17.500" cy="3.500" r="2"/><path d="M4.500 14.500H15.500V21M3.500 18A7 7 0 0 0 11 27M7.500 17.500H12.500V22.500H7.500z"/><text x="11" y="28" font-size="7" fill="#4a86c0" stroke="none">2D</text><path d="M9 33H13L11 35z" fill="#555" stroke="none"/><path d="M2 38.500H19" stroke="#ccc"/><path d="M5 43L8 46M13 43L10 46M5 52L8 49" stroke-dasharray="2 1"/><circle cx="13" cy="50" r="2.500"/><path d="M15 52L17 55"/><path d="M9 61H13L11 63z" fill="#555" stroke="none"/><circle cx="17.500" cy="72.500" r="2"/></svg></div>
</div>
<div class="sb d-flex flex-column" aria-hidden="true"><svg width="8" height="8"><use href="#up"/></svg><div style="flex:225"></div><div class="thumb" style="flex:14"></div><div style="flex:224"></div><svg width="8" height="8"><use href="#dn"/></svg></div>
</div>
<div class="viewbar d-flex align-items-center">
<span class="scale">1 : 100</span>
<svg class="ms-3" width="184" height="13" viewBox="0 0 184 13" fill="none" stroke="#444">
<path d="M1 2H13V11H1z" fill="#ddd"/><path d="M1 5H13M4 7H10M1 11L4 8M13 11L10 8M4 2L2 5M10 2L12 5"/>
<path d="M17.500 5.500L20.500 2.500H28.500L25.500 5.500zM17.500 5.500V11.500H25.500V5.500M25.500 11.500L28.500 8.500V2.500" fill="#f4f4f4"/>
<circle cx="38" cy="6" r="3" fill="#ffe27a" stroke="#d08a10"/><path d="M38 0V2M33 6H31M34 2L35 3M38 10V12M34 10L35 9" stroke="#d08a10"/><path d="M39 6L45 12M45 6L39 12" stroke="#e02818" stroke-width="1.800"/>
<circle cx="54" cy="5" r="3.500" fill="#cfe6fa" stroke="#3a7ab8"/><path d="M50 11H56" stroke="#555"/><path d="M56 6L62 12M62 6L56 12" stroke="#e02818" stroke-width="1.800"/>
<path d="M66 11H70V5H76M70 2V5M66 8H68" stroke="#3a7ab8" stroke-width="1.500"/><path d="M73 2V11M72 6L79 12M79 6L72 12" stroke="#e02818" stroke-width="1.500"/>
<path d="M83 11H87V4H93V11M87 2V5M83 8H86" stroke="#3a7ab8" stroke-width="1.500"/><circle cx="93" cy="6" r="2" fill="#cfe6fa" stroke="#3a7ab8"/>
<path d="M99 2L103 5M100 5Q101 9 105 7Q106 3 110 4Q112 7 108 9Q104 8 105 12"/>
<circle cx="122" cy="6" r="2.500" fill="#cfe6fa" stroke="#3a7ab8"/><path d="M122 9V12" stroke="#3a7ab8" stroke-width="2"/>
<path d="M133 3H143V10H133zM137 1V5M135 12H145" stroke-dasharray="2 1" stroke-width="1.300"/><circle cx="143" cy="9" r="2"/>
<path d="M150 11V3H159V11M149 7H158M153 3V11" stroke="#8a5a40" stroke-width="1.500"/><circle cx="159" cy="5" r="3" fill="#ffd24a" stroke="#d08a10"/>
<path d="M166.500 1V12M166 3.500H178M175 1L179 4L175 6" stroke-width="1.200"/><path d="M172 7H179V11H172z" fill="#999"/>
</svg>
<svg width="8" height="8" viewBox="0 0 8 8"><path d="M5.500 1L2.500 4L5.500 7" fill="none" stroke="#222" stroke-width="1.300"/></svg>
<div class="flex-fill d-flex align-self-stretch" aria-hidden="true"><div style="flex:209"></div><div style="flex:14;background:#cdcdcd"></div><div style="flex:204"></div></div>
<svg class="me-1" width="8" height="8" viewBox="0 0 8 8"><path d="M2.500 1L5.500 4L2.500 7" fill="none" stroke="#222" stroke-width="1.300"/></svg>
<svg class="ms-1 me-1" width="9" height="9" viewBox="0 0 9 9" fill="#aaa"><path d="M6 0H8V2H6zM3 3H5V5H3zM6 3H8V5H6zM0 6H2V8H0zM3 6H5V8H3zM6 6H8V8H6z"/></svg>
</div>
</section>

<aside class="dock-r d-flex flex-column flex-shrink-0 gutter">
<div class="ph d-flex justify-content-between align-items-center ps-1"><span>Properties</span><button aria-label="Close properties"><svg width="10" height="10"><use href="#x"/></svg></button></div>
<div class="typerow d-flex align-items-center">
<div class="thumbbox d-flex align-items-center justify-content-center"><svg width="26" height="26" viewBox="0 0 26 26" stroke="#4e535c" stroke-dasharray="2 1"><path d="M1 1H15V25H1z" fill="#d3d8df"/><path d="M15 2H24V9H15z" fill="#eef0f3"/><path d="M10 10H25V25H10z" fill="#fff"/></svg></div>
<span class="ms-1">Floor Plan</span><span class="dd ms-auto"></span></div>
<div class="d-flex align-items-center gap-1">
<div class="position-relative flex-fill"><select class="typesel w-100 d-block" aria-label="Element"><option>Floor Plan: 1 - Mech</option></select><svg class="position-absolute top-50 end-0 translate-middle" width="8" height="8"><use href="#dn"/></svg></div>
<button class="d-flex align-items-center gap-1 pe-1 text-nowrap"><svg width="12" height="12" viewBox="0 0 12 12" fill="none" stroke="#5a5f68"><path d="M1 1H5V5H1zM7 1H11V11H7zM1 7H5V11H1zM5 5H11M7 8H11"/></svg>Edit Type</button></div>
<div class="flex-fill d-flex overflow-hidden">
<div class="flex-fill overflow-hidden mw0"><table class="props"><colgroup><col class="cn"><col><col class="cx"></colgroup><tbody id="props"></tbody></table></div>
<div class="sb d-flex flex-column" aria-hidden="true"><svg width="8" height="8"><use href="#up"/></svg><div class="thumb" style="flex:242"></div><div style="flex:138"></div><svg width="8" height="8"><use href="#dn"/></svg></div>
</div>
<div class="d-flex justify-content-between align-items-center pb-1"><a class="help ps-1" href="#help">Properties help</a><button class="apply" disabled>Apply</button></div>
</aside>
</main>

<footer class="status d-flex align-items-start">
<span class="st">Ducts : Rectangular Duct : Radius Elbows / Taps</span>
<svg class="ms-auto mt-1" width="14" height="14" viewBox="0 0 14 14"><path d="M3 7H9V13H3z" fill="#d5e4f2" stroke="#3a6a98"/><path d="M5 1H10V7H5zM10 8H14V13H10z" fill="#6fbf6f" stroke="#2d6a3a"/></svg>
<select class="ms-1 worksets" aria-label="Workset"><option></option></select>
<svg class="ms-1 mt-1" width="12" height="12" viewBox="0 0 12 12" fill="none" stroke="#888"><path d="M2 6L6 2H11V5L6 9zM1 11L4 8"/></svg><span class="st ps-1">:0</span>
<svg class="ms-3 mt-1" width="14" height="12" viewBox="0 0 14 12"><path d="M1 1H13V12H1z" fill="#fff" stroke="#333a45"/><path d="M1 2H13" stroke="#333a45" stroke-width="2"/><path d="M3 6H6M8 6H11M5 9H11" stroke="#333a45"/></svg>
<svg class="ms-2 mt-1" width="12" height="12" viewBox="0 0 12 12"><path d="M0 0H12V12H0z" fill="#999"/><path d="M3 3L9 9" stroke="#ddd"/></svg>
<select class="ms-2 worksets" aria-label="Design option"><option>Main Model</option></select>
<svg class="toolset mt-1" width="130" height="14" viewBox="0 0 130 14" fill="none">
<path d="M1 3H6V7H1zM8 3H13V7H8z" stroke="#d8a018" stroke-width="2"/><path d="M6 6V14L9 11" fill="#fff" stroke="#333"/>
<path d="M21 9L28 3V13z" fill="#cfe6fa" stroke="#3a7ab8"/><path d="M27 1L33 7M33 1L27 7" stroke="#d02020" stroke-width="2"/>
<path d="M41 2H48V6H43V10H50" stroke="#d8762a" stroke-width="2.500"/><path d="M48 5V14L52 11z" fill="#fff" stroke="#333"/>
<path d="M62 4L65 2H70V12H62z" fill="#cfe6fa" stroke="#3a7ab8"/><path d="M67 1L73 7M73 1L67 7" stroke="#d02020" stroke-width="2"/>
<path d="M81 5H91M86 1V10M91 6V13L94 11z" stroke="#333"/>
<circle cx="107" cy="8" r="4" stroke="#999" stroke-width="2" stroke-dasharray="2 1"/>
<path d="M119 2H130L126 8V13H123V8z" fill="#a9adb5" stroke="#42474f"/></svg>
<span class="st pe-5">:0</span>
</footer>
</div>

<script>
// Guides before each label: | line, t tee, L corner, + and - boxes, space empty.
const tree = [
["||||t","1 - Lighting"],["||||L","2 - Lighting"],["|||-","Ceiling Plans"],["||| t","1 - Ceiling Elec"],["||| L","2 - Ceiling Elec"],
["||-","Power"],["|| -","Floor Plans"],["|| |t","1 - Power"],["|| |L","2 - Power"],["|| +","3D Views"],["|| +","Elevations (Building Elevation)"],
["|-","Mechanical"],["||-","HVAC"],["|| -","Floor Plans"],["|| |t","1 - Mech","sel"],["|| |L","2 - Mech"],["|| -","Ceiling Plans"],
["|| |t","1 - Ceiling Mech"],["|| |L","2 - Ceiling Mech"],["|| +","Elevations (Building Elevation)"],
["|-","Plumbing"],["| -","Plumbing"],["|  -","Floor Plans"],["|  |t","1 - Plumbing"],["|  |L","2 - Plumbing"],["|  -","3D Views"],["|  |L","3D Plumbing"],["|  +","Elevations (Building Elevation)"],
["t","Legends","t-leg"],["t","Schedules/Quantities (all)","t-sch"],["+","Reports","t-rep"],["t","Sheets (all)","t-she"],["+","Families","t-fam"],["+","Groups","t-grp"],["+","Revit Links","t-lnk"]];
const cell = {"|":'<i class="gd ln"></i>'," ":'<i class="gd"></i>',t:'<i class="gd te"></i>',L:'<i class="gd co"></i>',
"+":'<i class="gd ln bx"><svg width="9" height="9"><use href="#bp"/></svg></i>',"-":'<i class="gd ln bx"><svg width="9" height="9"><use href="#bm"/></svg></i>'};
document.getElementById("tree").innerHTML = tree.map(([g,t,k]) => {
  const icon = k && k !== "sel";
  const pre = icon ? `<svg class="ms-0 me-1 align-self-center" width="15" height="13"><use href="#${k}"/></svg>` : '<span class="gap6"></span>';
  return `<li>${[...g].map(c=>cell[c]).join("")}${pre}${k==="sel"?`<b>${t}</b>`:`<span>${t}</span>`}</li>`;
}).join("");
// Rows: [label, value, kind]; a lone string starts a group.
const rows = ["Graphics",["View Scale","1 : 100","in"],["Scale Value \u00a0\u00a0 1:","100","dim"],["Display Model","Normal"],["Detail Level","Medium"],["Parts Visibility","Show Original"],
["Visibility/Graphics Overri...","Edit...","btn"],["Graphic Display Options","Edit...","btn"],["Orientation","Project North"],["Wall Join Display","Clean all wall joins","dim"],["Discipline","Mechanical"],
["Show Hidden Lines","By Discipline"],["Color Scheme Location","Background"],["Color Scheme","&lt;none&gt;","btn"],["System Color Schemes","Edit...","btn"],["Default Analysis Display ...","None"],["Sub-Discipline","HVAC","x"],["Sun Path","","ck"],
"Underlay",["Range: Base Level","None"],["Range: Top Level","Unbounded","dim"],["Underlay Orientation","Look down"],"Extents",["Crop View","","ck"],["Crop Region Visible","","ck"],["Annotation Crop","","ck"]];
document.getElementById("props").innerHTML = rows.map((r,i) => {
  if (typeof r === "string") return `<tr><th class="grp" colspan="3" scope="colgroup"><span class="d-flex justify-content-between align-items-center">${r}<svg width="8" height="8" viewBox="0 0 8 8" fill="none" stroke="#222"><path d="M2 3.500L4 1.500L6 3.500M2 6.500L4 4.500L6 6.500"/></svg></span></th></tr>`;
  const [n,v,k] = r, id = "p"+i;
  const val = k==="btn" ? `<button class="eb" aria-label="${n}: edit">${v}</button>` : k==="in" ? `<input type="text" id="${id}" value="${v}">` : k==="ck" ? `<input type="checkbox" id="${id}">` : v;
  const lab = k==="in"||k==="ck" ? `<label for="${id}">${n}</label>` : n;
  return `<tr${k==="dim"?' class="dim"':''}><th scope="row">${lab}</th><td${k==="btn"||k==="in"?' class="full"':''}>${val}</td><td class="full">${k==="x"?'<button class="eb" aria-label="Browse"></button>':''}</td></tr>`;
}).join("");
</script>
<script src="https://cdn.jsdelivr.net/npm/bootstrap@5.3.0/dist/js/bootstrap.bundle.min.js"></script>
</body>
</html>
